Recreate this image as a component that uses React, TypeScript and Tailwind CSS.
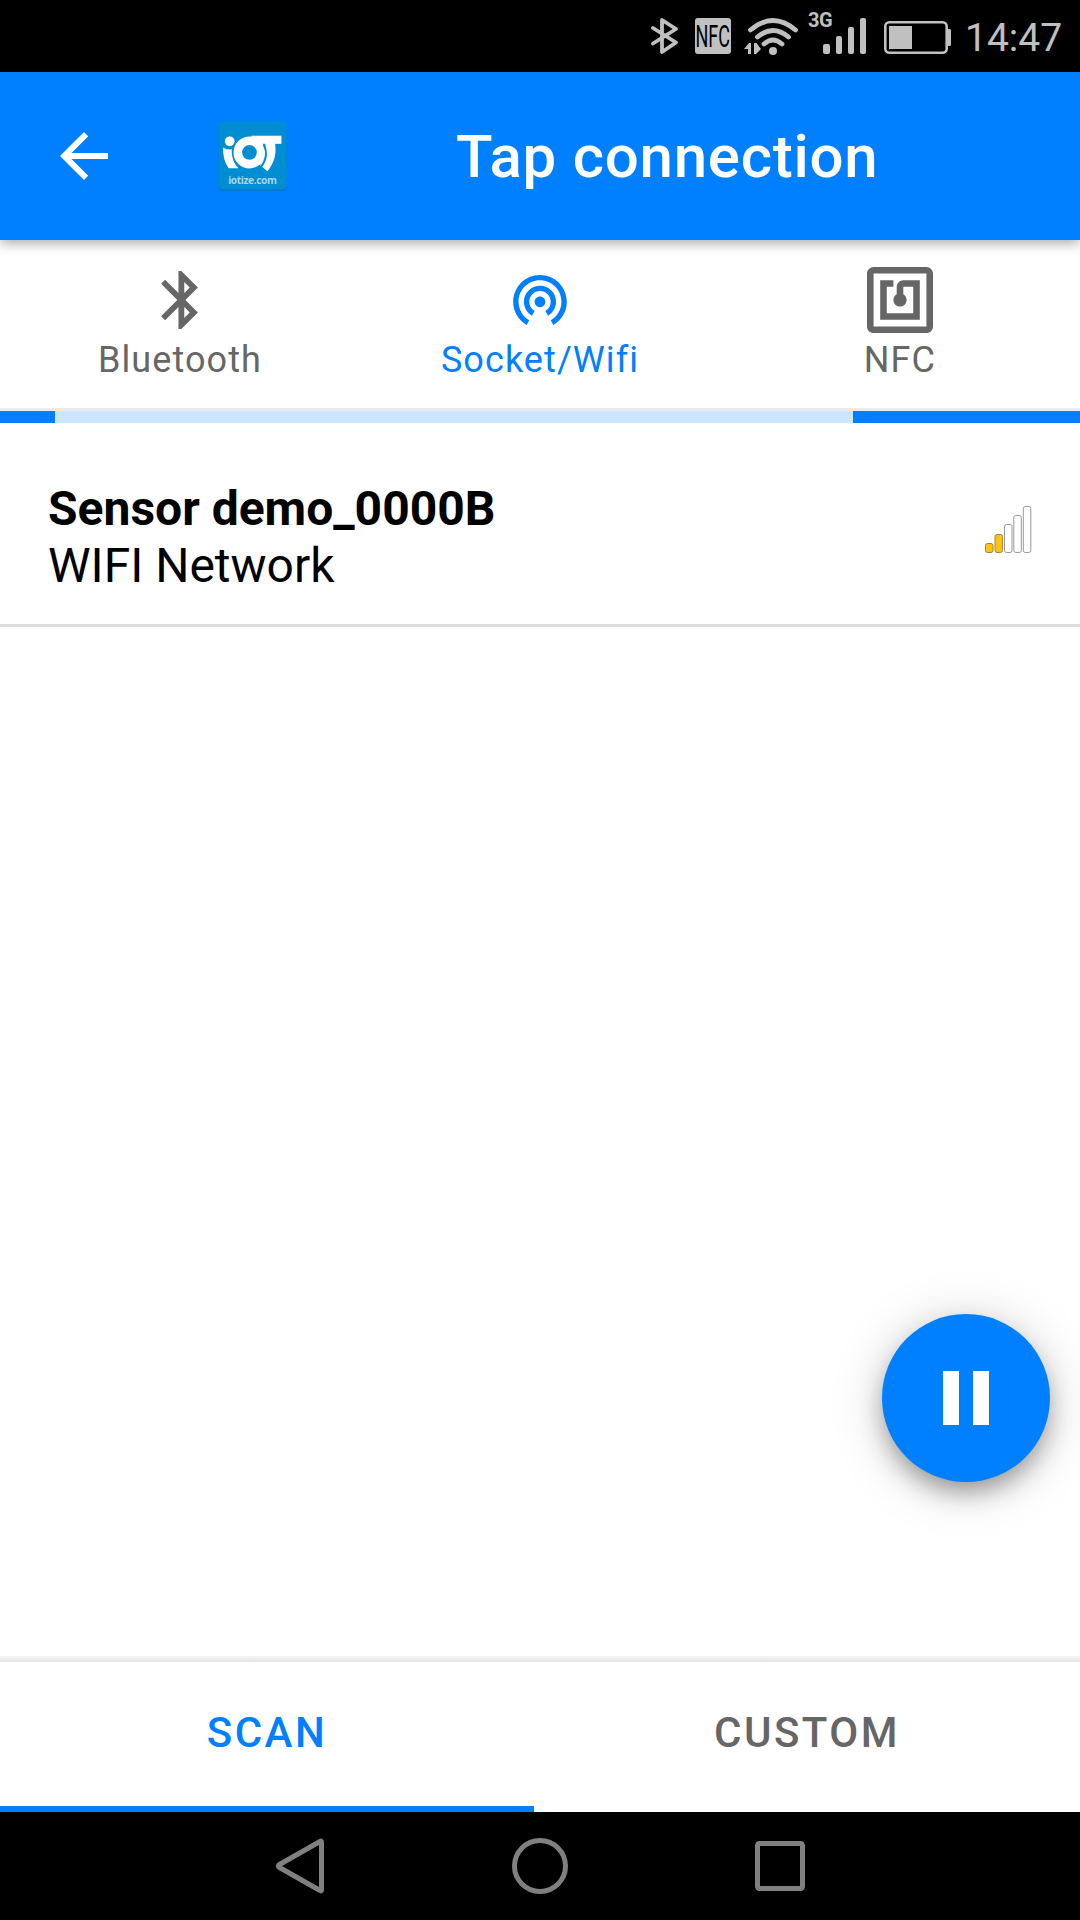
import type { ReactNode } from "react";

const BluetoothIcon = () => (
  <svg className="mr-0.5 w-[37px] h-[58px]" viewBox="5 2 12.71 20" fill="currentColor">
    <path d="M17.71 7.71L12 2h-1v7.59L6.41 5 5 6.41 10.59 12 5 17.59 6.41 19 11 14.41V22h1l5.71-5.71-4.3-4.29 4.3-4.29zM13 5.83l1.88 1.88L13 9.59V5.83zm1.88 10.46L13 18.17v-3.76l1.88 1.88z" />
  </svg>
);

const SocketIcon = () => (
  <svg className="w-[54px] h-[50px]" viewBox="2 3 20 18.65" fill="currentColor">
    <path d="M12 11c-1.1 0-2 .9-2 2s.9 2 2 2 2-.9 2-2-.9-2-2-2zm6 2c0-3.31-2.69-6-6-6s-6 2.69-6 6c0 2.22 1.21 4.15 3 5.19l1-1.74c-1.19-.7-2-1.97-2-3.45 0-2.21 1.79-4 4-4s4 1.79 4 4c0 1.48-.81 2.75-2 3.45l1 1.74c1.79-1.04 3-2.97 3-5.19zM12 3C6.48 3 2 7.48 2 13c0 3.7 2.01 6.92 4.99 8.65l1-1.73C5.61 18.53 4 15.96 4 13c0-4.42 3.58-8 8-8s8 3.58 8 8c0 2.96-1.61 5.53-4 6.92l1 1.73c2.99-1.73 5-4.95 5-8.65 0-5.52-4.48-10-10-10z" />
  </svg>
);

const NfcIcon = () => (
  <svg className="w-[66px] h-[66px]" viewBox="2 2 20 20" fill="currentColor">
    <path d="M20 2H4c-1.1 0-2 .9-2 2v16c0 1.1.9 2 2 2h16c1.1 0 2-.9 2-2V4c0-1.1-.9-2-2-2zm0 18H4V4h16v16zM18 6h-5c-1.1 0-2 .9-2 2v2.28c-.6.35-1 .98-1 1.72 0 1.1.9 2 2 2s2-.9 2-2c0-.74-.4-1.38-1-1.72V8h3v8H8V8h2V6H6v12h12V6z" />
  </svg>
);

const StatusBar = () => (
  <div className="flex h-[72px] items-start bg-black pl-[651px] text-[#c0c0c0]">
    <svg className="mt-[17px] w-[27px] h-[38px]" viewBox="0 0 27 38" fill="none" stroke="currentColor" strokeWidth="3.8" strokeLinejoin="round" strokeLinecap="round">
      <path d="M2 11L25 25.5 11 35V3L25 12 2 26.5" />
    </svg>
    <div className="mt-[18px] ml-[17px] flex h-9 w-9 items-center justify-center overflow-hidden rounded-[3px] bg-[#c0c0c0]">
      <span className="scale-x-[0.58] text-[31px] leading-none text-black">NFC</span>
    </div>
    <svg className="mt-[17px] ml-[13px] w-[54px] h-[39px]" viewBox="0 0 54 39" fill="none" stroke="currentColor" strokeWidth="4.8" strokeLinecap="round">
      <path d="M6.5 13Q29 -6 51.5 13M13.5 20Q29 7 44.5 20M20 27Q29 19 38 27" />
      <circle cx="29" cy="34" r="4" fill="currentColor" stroke="none" />
      <path d="M0 32L5 26H7V37H4V32zM17 32L12 37H10V26H12.5z" fill="currentColor" stroke="none" />
    </svg>
    <div className="mt-[10px] ml-[10px] w-[27px] text-[20px] leading-5 font-bold tracking-[-0.5px]">3G</div>
    <svg className="-ml-[12px] mt-[18px] w-11 h-9" viewBox="0 0 44 36" fill="currentColor">
      <rect x="0" y="26" width="7" height="10" rx="2" />
      <rect x="13" y="18" width="6" height="18" rx="2" />
      <rect x="25" y="9" width="6" height="27" rx="2" />
      <rect x="37" y="0" width="6" height="36" rx="2" />
    </svg>
    <svg className="mt-[21px] ml-[17px] w-[67px] h-[33px]" viewBox="0 0 67 33" fill="currentColor">
      <rect x="1.3" y="1.3" width="61.4" height="30.4" rx="4" fill="none" stroke="currentColor" strokeWidth="2.6" />
      <rect x="5" y="5" width="23" height="23" />
      <rect x="63" y="8" width="4" height="17" rx="1.5" />
    </svg>
    <div className="mt-[15px] ml-[14px] text-[39px] leading-[46px] whitespace-nowrap">14:47</div>
  </div>
);

const Logo = () => (
  <svg className="w-[69px] h-[70px] ml-[98px]" viewBox="0 0 68 69">
    <rect x="0.5" y="2" width="67" height="67" rx="4" fill="#0674c8" />
    <rect x="0.5" y="0.5" width="67" height="67" rx="4" fill="#008dd2" />
    <g fill="none" stroke="#fff">
      <circle cx="11.5" cy="20" r="4.8" fill="#fff" stroke="none" />
      <path d="M5 26Q9.5 29 13.5 27.5Q13 39 20 46.5H10.5Q4.5 38 5 26z" fill="#fff" stroke="none" />
      <circle cx="31" cy="31" r="11.5" strokeWidth="8.5" />
      <path d="M33 18.5H62.5" strokeWidth="8" />
      <path d="M51 20Q54.5 35 45 46.5" strokeWidth="9.5" />
      <path d="M45 23Q51 35 41.5 46.5" stroke="#008dd2" strokeWidth="1.8" />
    </g>
    <text x="34" y="62.5" textAnchor="middle" textLength="48" fontFamily="Open Sans, sans-serif" fontSize="10" fontWeight="700" fill="#a5d8ee">iotize.com</text>
  </svg>
);

const Header = () => (
  <header className="relative z-10 flex h-[168px] items-center bg-[#0080ff] pl-12 text-white shadow-[0_3px_12px_rgba(0,0,0,0.35)]">
    <svg className="w-[72px] h-[72px]" viewBox="0 0 24 24" fill="currentColor">
      <path d="M20 11H7.83l5.59-5.59L12 4l-8 8 8 8 1.41-1.41L7.83 13H20v-2z" />
    </svg>
    <Logo />
    <h1 className="mt-0.5 ml-[169px] text-[60px] leading-[72px] font-medium tracking-[0.75px] whitespace-nowrap">Tap connection</h1>
  </header>
);

const Tab = ({ label, icon, active }: { label: string; icon: ReactNode; active?: boolean }) => (
  <div className={`flex flex-1 flex-col items-center pt-[26px] ${active ? "text-[#0080ff]" : "text-[#666]"}`}>
    <div className="flex h-[68px] items-center justify-center">{icon}</div>
    <span className="mt-[5px] text-[36px] leading-[42px] tracking-[1.08px]">{label}</span>
  </div>
);

const SignalBars = () => {
  const bars = [
    { x: 0.5, h: 9, on: true },
    { x: 10, h: 18, on: true },
    { x: 19.5, h: 28, on: false },
    { x: 28.8, h: 37, on: false },
    { x: 38.3, h: 46, on: false },
  ];

  return (
    <svg className="mb-[9px] w-[47px] h-12" viewBox="0 0 47 48">
      {bars.map((bar) => (
        <rect
          key={bar.x}
          x={bar.x}
          y={47.5 - bar.h}
          width="7.5"
          height={bar.h}
          rx="2"
          fill={bar.on ? "#ffc20e" : "#fff"}
          stroke={bar.on ? "#a08748" : "#999"}
        />
      ))}
    </svg>
  );
};

const NavBar = () => (
  <div className="flex h-[108px] items-center justify-center bg-black text-[#808080]">
    <svg className="w-[530px] h-14" viewBox="0 0 530 56" fill="none" stroke="currentColor" strokeWidth="5" strokeLinejoin="round">
      <path d="M46.5 4Q46.5 2.5 45 3.5L4.5 26.5Q2 28 4.5 29.5L45 52.5Q46.5 53.5 46.5 52z" />
      <circle cx="265" cy="28" r="25.5" />
      <rect x="482.5" y="5.5" width="45" height="45" rx="2" />
    </svg>
  </div>
);

const App = () => {
  return (
    <div className="relative flex h-[1920px] w-[1080px] flex-col overflow-hidden bg-white font-['Roboto',sans-serif]">
      <StatusBar />
      <Header />

      <nav className="flex h-[171px] border-b-[3px] border-[#ebebeb]">
        <Tab label="Bluetooth" icon={<BluetoothIcon />} />
        <Tab label="Socket/Wifi" icon={<SocketIcon />} active />
        <Tab label="NFC" icon={<NfcIcon />} />
      </nav>

      {/* Scan progress */}
      <div className="flex h-3 justify-between bg-[#cce6ff]">
        <div className="w-[55px] bg-[#0080ff]" />
        <div className="w-[227px] bg-[#0080ff]" />
      </div>

      <main className="flex-1">
        <div className="flex h-[204px] items-center justify-between border-b-[3px] border-[#ddd] pt-[26px] pr-[48px] pb-[7px] pl-12">
          <div className="pt-2 text-[48px] leading-[57px] text-black">
            <h2 className="font-bold">Sensor demo_0000B</h2>
            <p>WIFI Network</p>
          </div>
          <SignalBars />
        </div>
      </main>

      <button className="absolute top-[1314px] left-[882px] flex h-[168px] w-[168px] items-center justify-center gap-[14px] rounded-full bg-[#0080ff] shadow-[0_12px_24px_-3px_rgba(0,0,0,0.35),0_6px_54px_rgba(0,0,0,0.18)]">
        <span className="h-[54px] w-4 bg-white" />
        <span className="h-[54px] w-4 bg-white" />
      </button>

      <div className="h-1.5 bg-linear-to-b from-[#f6f6f6] to-[#e2e2e2]" />
      <div className="flex h-[150px] text-[42px] leading-[50px] font-medium tracking-[2.5px]">
        <div className="flex w-[534px] justify-center border-b-[6px] border-[#0080ff] pt-[46px] text-[#0080ff]">SCAN</div>
        <div className="flex w-[546px] justify-center pt-[46px] text-[#666]">CUSTOM</div>
      </div>
      <NavBar />
    </div>
  );
};

export default App;
